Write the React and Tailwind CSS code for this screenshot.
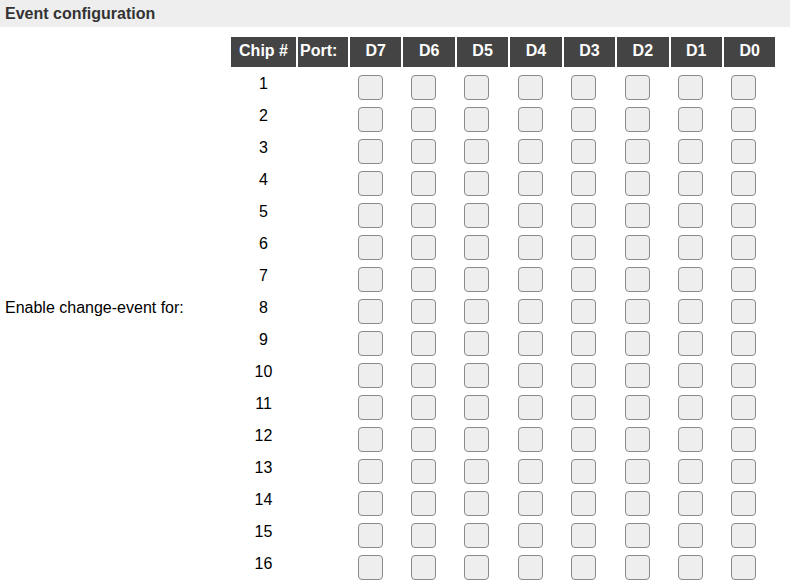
import React from "react";

const bits = ["D7", "D6", "D5", "D4", "D3", "D2", "D1", "D0"];
const rows = Array.from({ length: 16 }, (_, i) => i + 1);

function Box() {
  return (
    <div className="ml-[7.5px] mt-[6px] h-[25px] w-[25px] rounded-[4px] border border-[#8a8a8a] bg-[#eeeeee]" />
  );
}

export default function App() {
  return (
    <div
      className="w-[790px] h-[588px] bg-white text-black text-[16px]"
      style={{ fontFamily: '"Liberation Sans", Arial, sans-serif' }}
    >
      <div className="h-[27px] bg-[#eeeeee] px-[5px] pt-[5px] font-bold leading-[18px] text-[#333333]">
        Event configuration
      </div>
      <div className="ml-[4px] mt-[10px] grid grid-cols-[225px_65px_50px_repeat(8,51.43px)] grid-rows-[repeat(17,30px)] gap-x-[2px] gap-y-[2px]">
        <div className="row-span-17 flex items-center pl-[1px] leading-[18px]">
          Enable change-event for:
        </div>
        <div className="bg-[#444444] pt-[5px] text-center font-bold leading-[18px] text-white">Chip #</div>
        <div className="bg-[#444444] pl-[2px] pt-[5px] font-bold leading-[18px] text-white">Port:</div>
        {bits.map((b) => (
          <div key={b} className="bg-[#444444] pt-[5px] text-center font-bold leading-[18px] text-white">
            {b}
          </div>
        ))}
        {rows.map((r) => (
          <React.Fragment key={r}>
            <div className="pt-[6px] text-center leading-[18px]">{r}</div>
            <div />
            {bits.map((b) => (
              <div key={b}>
                <Box />
              </div>
            ))}
          </React.Fragment>
        ))}
      </div>
    </div>
  );
}
